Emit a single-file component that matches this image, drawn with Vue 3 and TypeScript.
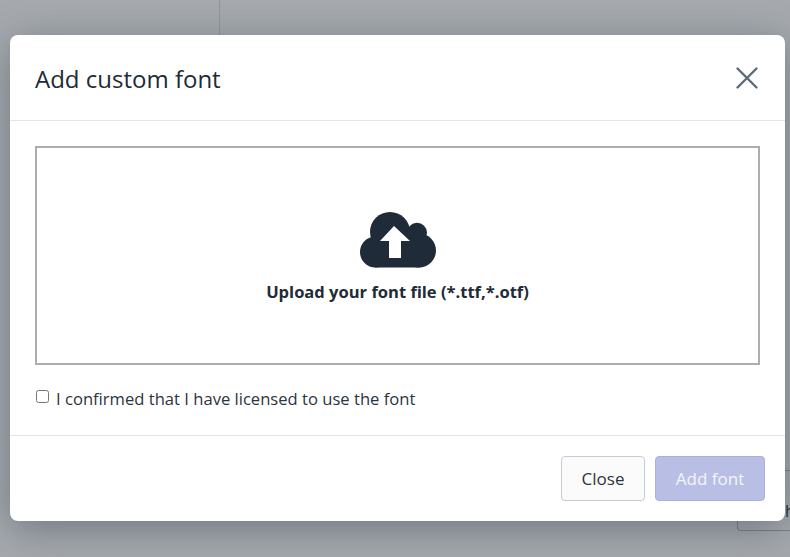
<script setup lang="ts">
import { ref } from 'vue'

const confirmed = ref(false)
</script>

<template>
  <div class="page">
    <div class="page-bg">
      <div class="sidebar"></div>
      <div class="page-main">
        <div class="page-action"><span class="page-action-text">Change</span></div>
      </div>
    </div>
    <div class="backdrop">
      <div class="modal">
        <header class="modal-header">
          <h5 class="modal-title">Add custom font</h5>
          <button class="close-x" title="Close">
            <svg width="24" height="24" viewBox="0 0 24 24" fill="none">
              <path d="M2.5 2.5 21.5 21.5M21.5 2.5 2.5 21.5" stroke="#5c6b79" stroke-width="2.4" stroke-linecap="round" />
            </svg>
          </button>
        </header>
        <div class="modal-body">
          <div class="dropzone">
            <svg class="cloud" width="76" height="56" viewBox="0 0 76 56">
              <g fill="#1f2b38">
                <circle cx="30" cy="20" r="20" />
                <circle cx="57" cy="20.7" r="10" />
                <circle cx="15.5" cy="40" r="15.5" />
                <circle cx="59" cy="38.5" r="17" />
                <rect x="15" y="25" width="45" height="30.5" />
              </g>
              <path fill="#fff" d="M34 14 50 29H41V46H29V29H20Z" />
            </svg>
            <div class="drop-label">Upload your font file (*.ttf,*.otf)</div>
          </div>
          <label class="license">
            <input v-model="confirmed" type="checkbox" class="license-check" />
            <span>I confirmed that I have licensed to use the font</span>
          </label>
        </div>
        <footer class="modal-footer">
          <button class="btn btn-light">Close</button>
          <button class="btn btn-primary" disabled>Add font</button>
        </footer>
      </div>
    </div>
  </div>
</template>

<style scoped>
.page {
  position: relative;
  width: 790px;
  height: 557px;
  overflow: hidden;
  background: #fff;
  font-family: "Open Sans", "Noto Sans", sans-serif;
  color: #212b36;
}

.page-bg {
  display: flex;
  height: 100%;
}

.sidebar {
  width: 219px;
  height: 120px;
  border-right: 1px solid #d9dce0;
}

.page-main {
  flex: 1;
  display: flex;
  justify-content: flex-end;
  align-items: flex-end;
  padding-bottom: 26px;
}

.page-action {
  width: 53px;
  height: 61px;
  border: 1px solid #bbb;
  border-right: none;
  border-radius: 4px 0 0 4px;
  padding: 29px 0 0 37px;
  box-sizing: border-box;
  font-size: 16px;
  line-height: 22px;
  white-space: nowrap;
  overflow: hidden;
}

.backdrop {
  position: absolute;
  inset: 0;
  background: rgba(33, 43, 54, 0.4);
  padding: 35px 5px 36px 10px;
  box-sizing: border-box;
}

.modal {
  height: 100%;
  background: #fff;
  border-radius: 8px;
  display: flex;
  flex-direction: column;
  box-shadow: 0 8px 40px rgba(33, 43, 54, 0.4);
}

.modal-header {
  height: 86px;
  box-sizing: border-box;
  display: flex;
  align-items: center;
  justify-content: space-between;
  padding: 4px 26px 0 25px;
  border-bottom: 1px solid #e3e5e8;
}

.modal-title {
  margin: 0;
  font-size: 24px;
  font-weight: 400;
  line-height: 1.2;
}

.close-x {
  display: flex;
  padding: 0;
  margin-top: -4px;
  border: none;
  background: transparent;
}

.modal-body {
  flex: 1;
  padding: 25px 25px 0;
}

.dropzone {
  height: 219px;
  box-sizing: border-box;
  border: 2px solid #adadad;
  display: flex;
  flex-direction: column;
  align-items: center;
  padding-top: 64px;
}

.drop-label {
  margin-top: 12px;
  font-size: 16.55px;
  font-weight: 700;
}

.license {
  display: flex;
  align-items: center;
  gap: 7px;
  margin-top: 22px;
  font-size: 16.6px;
  line-height: 24px;
  color: #2b3540;
}

.license-check {
  margin: 0 0 5px 1px;
  width: 13px;
  height: 13px;
}

.modal-footer {
  height: 86px;
  box-sizing: border-box;
  display: flex;
  justify-content: flex-end;
  gap: 10px;
  padding: 20px 20px 0;
  border-top: 1px solid #e3e5e8;
}

.btn {
  height: 45px;
  border-radius: 4px;
  font-family: inherit;
  font-size: 17px;
}

.btn-light {
  width: 84px;
  background: #fbfbfc;
  border: 1px solid #c3ccd6;
  color: #2b3540;
}

.btn-primary {
  width: 110px;
  background: #b9bfe4;
  border: 1px solid #a9b0de;
  color: #f4f5fb;
}
</style>

<style>
html,
body {
  margin: 0;
}
</style>
